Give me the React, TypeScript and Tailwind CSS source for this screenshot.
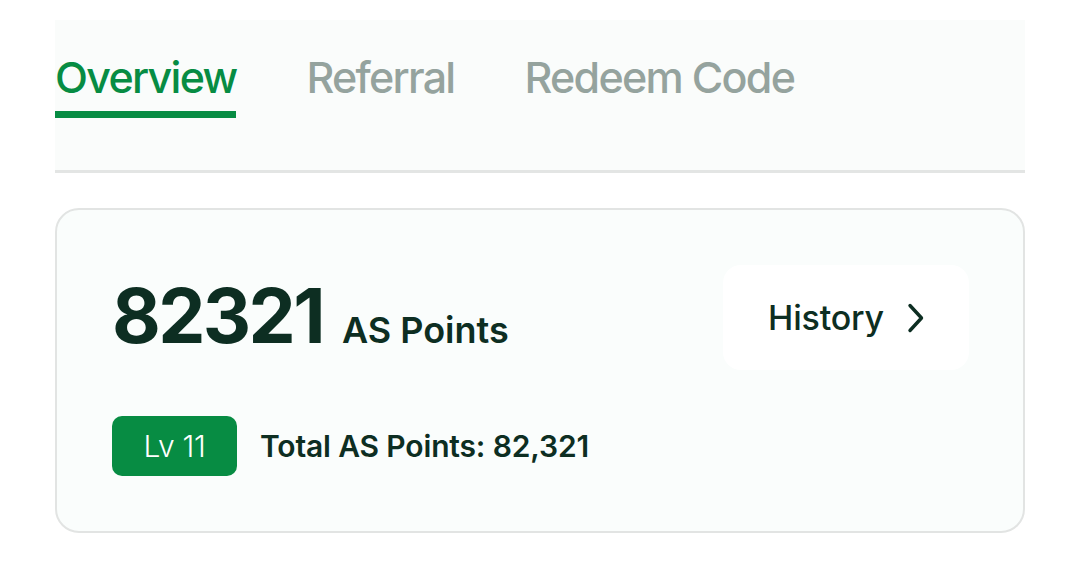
import React from 'react';

const tabs = ['Overview', 'Referral', 'Redeem Code'];

const App: React.FC = () => {
  return (
    <div className="w-full h-[566px] bg-white font-['Inter',sans-serif] text-[#0d2e22]">
      <div className="ml-[55px] w-[970px] pt-[20px]">
        {/* tabs */}
        <div className="bg-[#fafcfb] h-[153px] border-b-[3px] border-[#e3e5e4] flex gap-[70px] pt-[29px]">
          {tabs.map((t, i) => (
            <div key={t} className="flex flex-col">
              <span
                className={
                  'text-[43px] leading-[56px] font-medium tracking-[-0.04em] ' +
                  (i === 0 ? 'text-[#078c43]' : 'text-[#95a39e]')
                }
              >
                {t}
              </span>
              {i === 0 && <div className="mt-[6px] h-[7px] bg-[#078c43]" />}
            </div>
          ))}
        </div>

        {/* points card */}
        <div className="mt-[35px] h-[325px] rounded-[24px] border-2 border-[#e2e4e3] bg-[#fafdfc] pl-[55px] pr-[54px] pt-[55px]">
          <div className="flex items-center justify-between">
            <div className="flex items-baseline gap-[19px]">
              <span className="text-[75px] leading-none font-bold tracking-[-0.035em]">82321</span>
              <span className="text-[36px] font-semibold tracking-[0em]">AS Points</span>
            </div>
            <button className="w-[246px] h-[105px] rounded-[18px] bg-white flex items-center justify-center gap-[22px] pl-[2px]">
              <span className="text-[34px] font-medium tracking-[-0.005em]">History</span>
              <svg width="20" height="32" viewBox="0 0 20 32" fill="none" className="mt-[1px]">
                <path d="M4 3.5l11.5 12.5-11.5 12.5" stroke="#0d2e22" strokeWidth="3.4" strokeLinecap="round" strokeLinejoin="round" />
              </svg>
            </button>
          </div>
          <div className="mt-[46px] flex items-center gap-[23px]">
            <span className="w-[125px] h-[60px] rounded-[10px] bg-[#078c43] text-white text-[30px] font-light tracking-[-0.01em] flex items-center justify-center">
              Lv 11
            </span>
            <span className="text-[30px] font-semibold tracking-[-0.005em]">Total AS Points: 82,321</span>
          </div>
        </div>
      </div>
    </div>
  );
};

export default App;
